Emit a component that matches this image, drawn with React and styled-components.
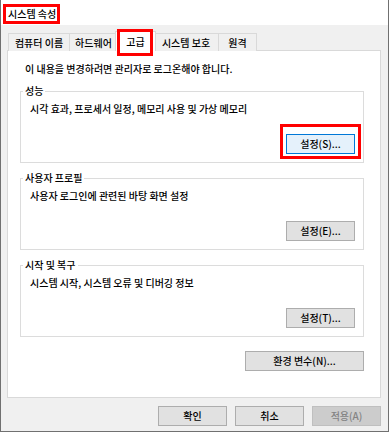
import React from "react";
import styled, { createGlobalStyle } from "styled-components";

const Global = createGlobalStyle`
  html, body { margin: 0; padding: 0; background: #ffffff; }
  body {
    font-family: "Noto Sans CJK KR", "Noto Sans", sans-serif;
    font-size: 10px;
    font-weight: 500;
    color: #000;
  }
  * { box-sizing: border-box; }
`;

const Window = styled.div`
  width: 389px;
  height: 432px;
  display: flex;
  flex-direction: column;
  border: 1px solid #707070;
  border-top: none;
  background: #f0f0f0;
`;

const TitleBar = styled.div`
  height: 25px;
  flex: none;
  background: #ffffff;
  display: flex;
  align-items: flex-start;
  padding: 4px 0 0 2px;
`;

const TitleMark = styled.span`
  display: inline-flex;
  align-items: center;
  height: 20px;
  padding: 0 1px 0 2px;
  border: 3px solid #ff0000;
  line-height: 14px;
  white-space: nowrap;
`;

const Body = styled.div`
  flex: 1;
  display: flex;
  flex-direction: column;
  padding: 6px 7px 0 6px;
`;

const TabStrip = styled.div`
  display: flex;
  align-items: flex-end;
  height: 20px;
  margin-bottom: -1px;
  padding-left: 1px;
`;

const Tab = styled.div`
  position: relative;
  width: ${(p) => p.$w}px;
  height: ${(p) => (p.$active ? 20 : 18)}px;
  margin-left: ${(p) => (p.$first ? 0 : p.$active ? -3 : -1)}px;
  margin-right: ${(p) => (p.$active ? -2 : 0)}px;
  padding-top: ${(p) => (p.$active ? 1 : 0)}px;
  z-index: ${(p) => (p.$active ? 1 : 0)};
  display: flex;
  align-items: center;
  justify-content: center;
  border: 1px solid #d9d9d9;
  border-bottom: none;
  background: ${(p) => (p.$active ? "#ffffff" : "#f0f0f0")};
  line-height: 14px;
  white-space: nowrap;

  ${(p) =>
    p.$marked &&
    `
    &::after {
      content: "";
      position: absolute;
      top: -3px;
      left: 1px;
      right: 2px;
      bottom: -5px;
      border: 3px solid #ff0000;
      pointer-events: none;
    }
  `}
`;

const Panel = styled.div`
  height: 348px;
  flex: none;
  display: flex;
  flex-direction: column;
  background: #ffffff;
  border: 1px solid #d9d9d9;
  padding: 11px 16px 0 12px;
`;

const Notice = styled.div`
  line-height: 14px;
  padding-left: 5px;
  white-space: nowrap;
`;

const Group = styled.fieldset`
  margin: 8px 0 0;
  min-inline-size: 0;
  border: 1px solid #dcdcdc;
  padding: 0 8px 8px 9px;
`;

const Legend = styled.legend`
  margin-left: -7px;
  padding: 0 2px;
  line-height: 14px;
  font-size: 10px;
`;

const Description = styled.div`
  margin-top: 4px;
  line-height: 14px;
  white-space: nowrap;
`;

const ButtonRow = styled.div`
  display: flex;
  justify-content: flex-end;
  margin-top: ${(p) => p.$top}px;
  gap: 8px;
`;

const Button = styled.button`
  width: ${(p) => p.$w}px;
  height: 20px;
  padding: 0;
  display: inline-flex;
  align-items: center;
  justify-content: center;
  font-family: inherit;
  font-size: 10px;
  font-weight: inherit;
  line-height: 14px;
  white-space: nowrap;
  border: 1px solid ${(p) => (p.$focused ? "#0078d7" : "#adadad")};
  background: ${(p) => (p.$focused ? "#e5f1fb" : "#e1e1e1")};
  color: #000;

  &:disabled {
    border-color: #bfbfbf;
    background: #cccccc;
    color: #838383;
  }
`;

const Highlight = styled.span`
  position: relative;
  display: inline-flex;

  &::after {
    content: "";
    position: absolute;
    top: -10px;
    right: -6px;
    bottom: -5px;
    left: -6px;
    border: 3px solid #ff0000;
    pointer-events: none;
  }
`;

const Footer = styled.div`
  display: flex;
  justify-content: flex-end;
  gap: 8px;
  margin-top: 8px;
`;

const tabs = [
  { label: "컴퓨터 이름", w: 62 },
  { label: "하드웨어", w: 49 },
  { label: "고급", w: 41, active: true },
  { label: "시스템 보호", w: 66 },
  { label: "원격", w: 39 },
];

const groups = [
  {
    legend: "성능",
    text: "시각 효과, 프로세서 일정, 메모리 사용 및 가상 메모리",
    button: "설정(S)...",
    marked: true,
  },
  {
    legend: "사용자 프로필",
    text: "사용자 로그인에 관련된 바탕 화면 설정",
    button: "설정(E)...",
  },
  {
    legend: "시작 및 복구",
    text: "시스템 시작, 시스템 오류 및 디버깅 정보",
    button: "설정(T)...",
  },
];

export default function App() {
  return (
    <>
      <Global />
      <Window>
        <TitleBar>
          <TitleMark>시스템 속성</TitleMark>
        </TitleBar>
        <Body>
          <TabStrip>
            {tabs.map((t, i) => (
              <Tab
                key={t.label}
                $w={t.w}
                $first={i === 0}
                $active={t.active}
                $marked={t.active}
              >
                {t.label}
              </Tab>
            ))}
          </TabStrip>
          <Panel>
            <Notice>이 내용을 변경하려면 관리자로 로그온해야 합니다.</Notice>
            {groups.map((g) => (
              <Group key={g.legend}>
                <Legend>{g.legend}</Legend>
                <Description>{g.text}</Description>
                <ButtonRow $top={18}>
                  {g.marked ? (
                    <Highlight>
                      <Button $w={69} $focused>
                        {g.button}
                      </Button>
                    </Highlight>
                  ) : (
                    <Button $w={69}>{g.button}</Button>
                  )}
                </ButtonRow>
              </Group>
            ))}
            <ButtonRow $top={14}>
              <Button $w={119}>환경 변수(N)...</Button>
            </ButtonRow>
          </Panel>
          <Footer>
            <Button $w={69}>확인</Button>
            <Button $w={69}>취소</Button>
            <Button $w={69} disabled>
              적용(A)
            </Button>
          </Footer>
        </Body>
      </Window>
    </>
  );
}
